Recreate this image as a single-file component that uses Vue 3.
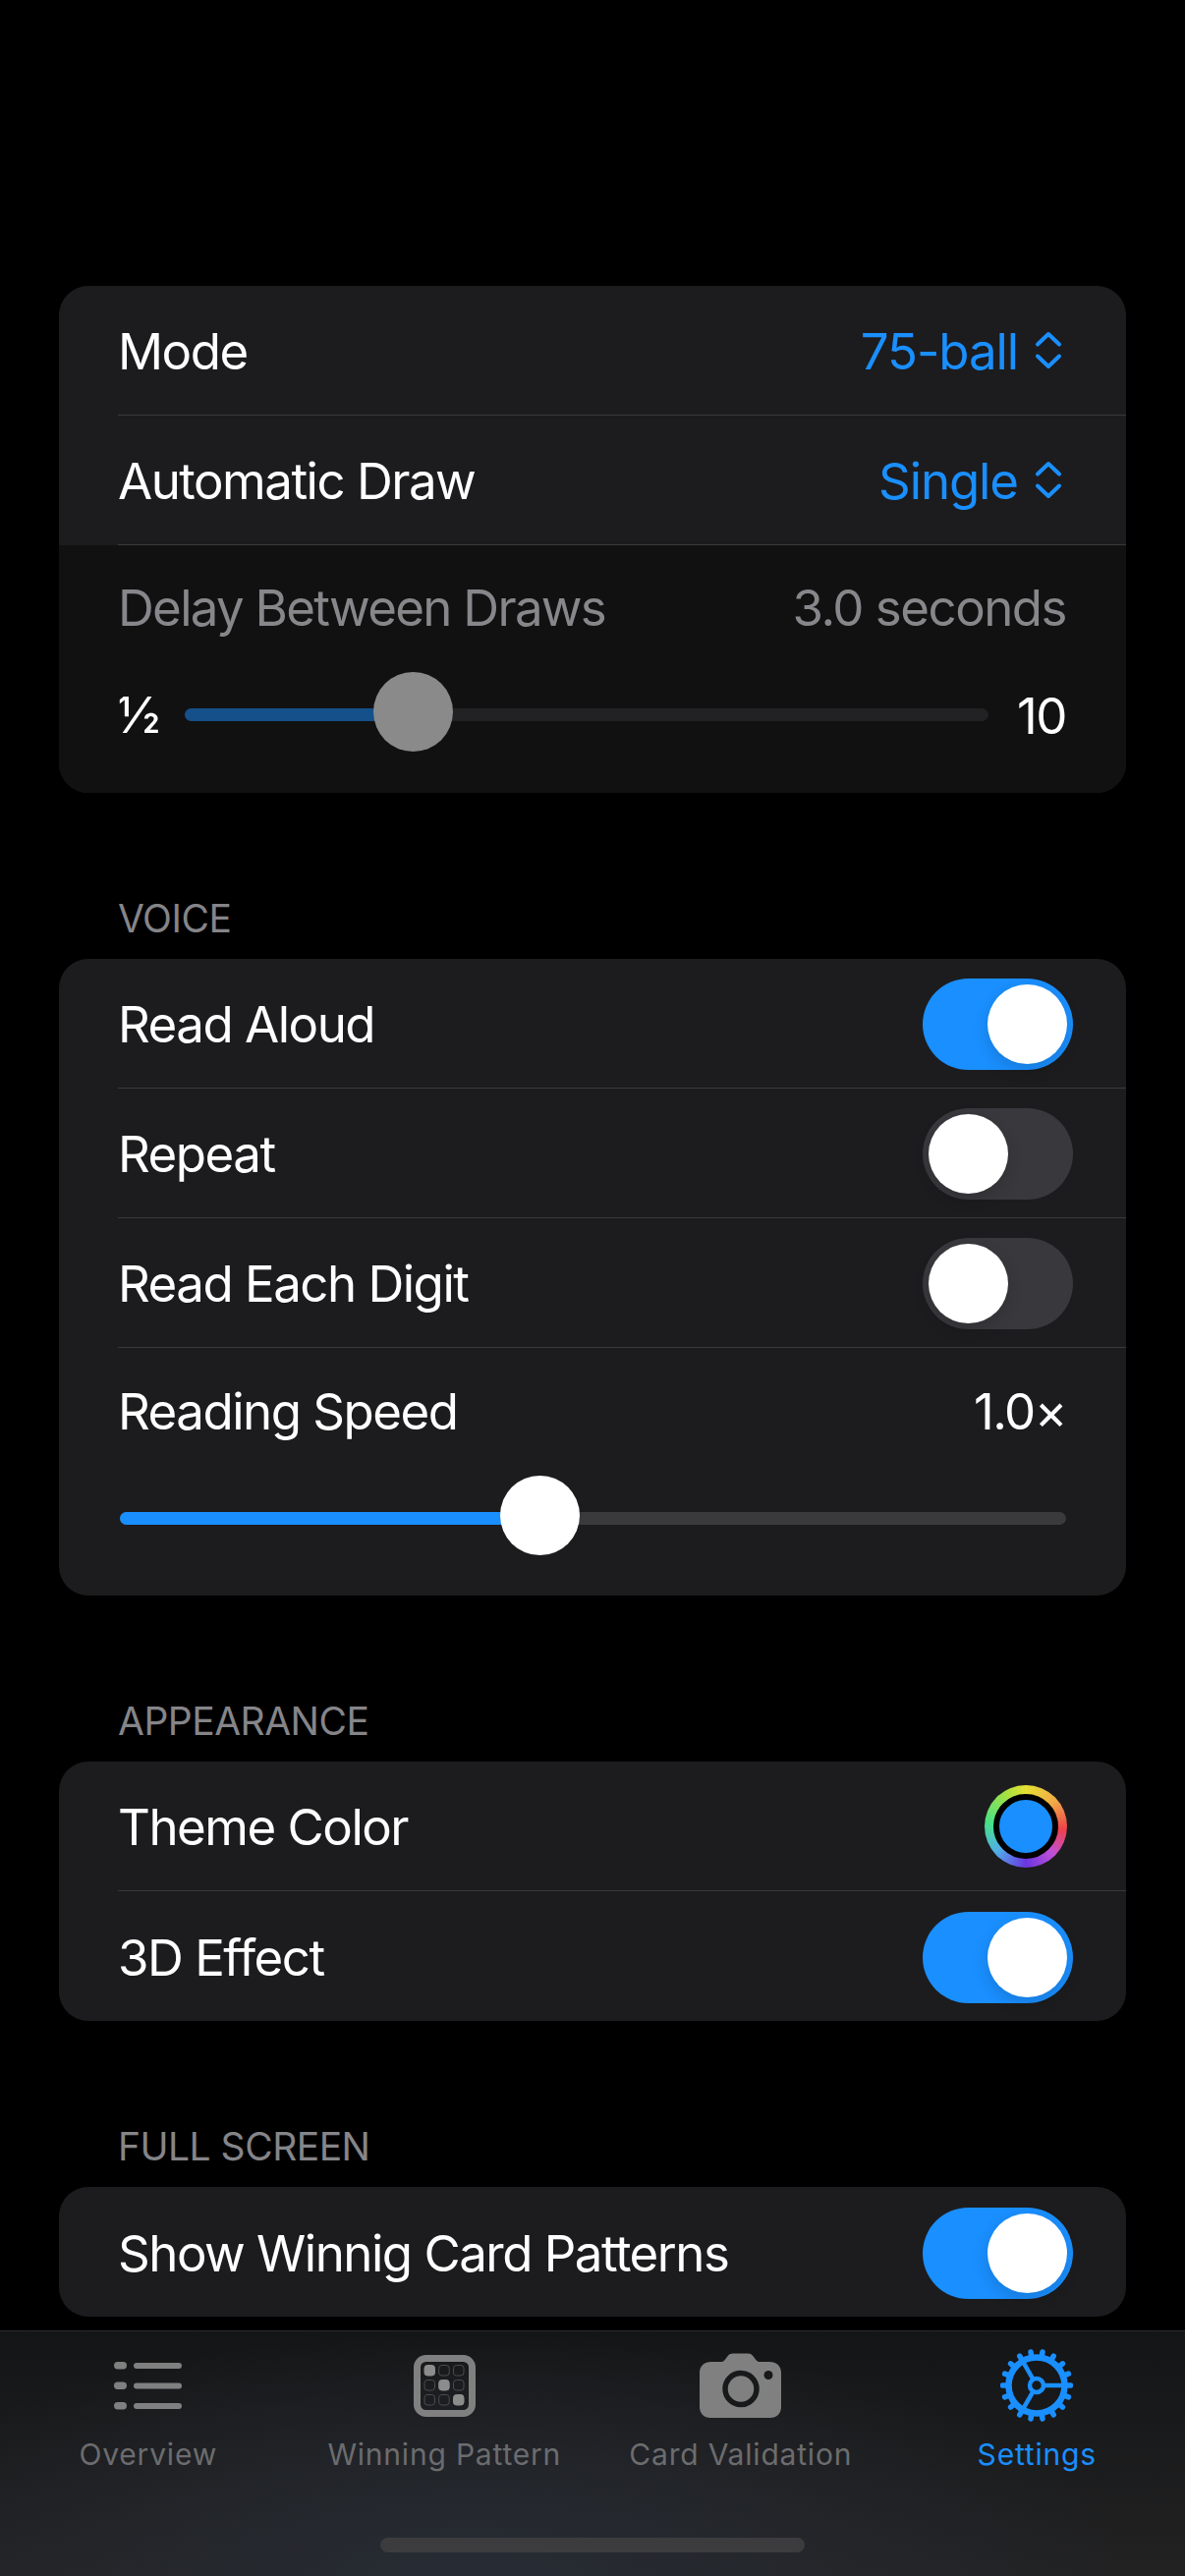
<script setup>
const voiceToggles = [
  { label: 'Read Aloud', on: true },
  { label: 'Repeat', on: false },
  { label: 'Read Each Digit', on: false },
]
const teeth = Array.from({ length: 18 }, (_, i) => {
  const a = (i * 20 * Math.PI) / 180
  return {
    x1: 37 + 29 * Math.cos(a),
    y1: 37 + 29 * Math.sin(a),
    x2: 37 + 34.5 * Math.cos(a),
    y2: 37 + 34.5 * Math.sin(a),
  }
})
const spokes = [0, 120, 240].map((d) => {
  const a = (d * Math.PI) / 180
  return {
    x1: 37 + 7 * Math.cos(a),
    y1: 37 + 7 * Math.sin(a),
    x2: 37 + 29 * Math.cos(a),
    y2: 37 + 29 * Math.sin(a),
  }
})
const cells = [
  { x: 432, y: 2407.5, on: true }, { x: 446.7, y: 2407.5 }, { x: 461.5, y: 2407.5 },
  { x: 432, y: 2422.5 }, { x: 446.7, y: 2422.5, on: true }, { x: 461.5, y: 2422.5 },
  { x: 432, y: 2437.5 }, { x: 446.7, y: 2437.5 }, { x: 461.5, y: 2437.5, on: true },
].map((c) => ({ ...c, x: c.x - 421, y: c.y - 2397 }))
</script>

<template>
  <div class="screen">
    <main class="list">
      <section class="card">
        <div class="row">
          <span class="label">Mode</span>
          <span class="picker"><span class="pick-value">75-ball</span>
            <svg class="updown" width="28" height="39" viewBox="0 0 28 39" fill="none" stroke="#1a8fff" stroke-width="4" stroke-linecap="round" stroke-linejoin="round"><path d="M3 13.500 14 3l11 10.500M3 25.500 14 36l11-10.500"/></svg>
          </span>
        </div>
        <div class="row">
          <span class="label">Automatic Draw</span>
          <span class="picker"><span class="pick-value">Single</span>
            <svg class="updown" width="28" height="39" viewBox="0 0 28 39" fill="none" stroke="#1a8fff" stroke-width="4" stroke-linecap="round" stroke-linejoin="round"><path d="M3 13.500 14 3l11 10.500M3 25.500 14 36l11-10.500"/></svg>
          </span>
        </div>
        <div class="disabled">
          <div class="value-line dim">
            <span class="label tight">Delay Between Draws</span>
            <span class="value">3.0 seconds</span>
          </div>
          <div class="delay-slider">
            <span class="half">½</span>
            <div class="track dark">
              <div class="fill dark-fill"></div>
              <div class="thumb gray-thumb"></div>
            </div>
            <span class="value">10</span>
          </div>
        </div>
      </section>

      <h2 class="section">VOICE</h2>
      <section class="card">
        <div v-for="t in voiceToggles" :key="t.label" class="row">
          <span class="label">{{ t.label }}</span>
          <span class="switch" :class="{ on: t.on }"><i></i></span>
        </div>
        <div class="speed">
          <div class="value-line">
            <span class="label">Reading Speed</span>
            <span class="value">1.0×</span>
          </div>
          <div class="track speed-track">
            <div class="fill speed-fill"></div>
            <div class="thumb speed-thumb"></div>
          </div>
        </div>
      </section>

      <h2 class="section">APPEARANCE</h2>
      <section class="card">
        <div class="row">
          <span class="label">Theme Color</span>
          <span class="well"><i></i></span>
        </div>
        <div class="row last">
          <span class="label">3D Effect</span>
          <span class="switch on"><i></i></span>
        </div>
      </section>

      <h2 class="section">FULL SCREEN</h2>
      <section class="card">
        <div class="row last">
          <span class="label">Show Winnig Card Patterns</span>
          <span class="switch on"><i></i></span>
        </div>
      </section>
    </main>

    <nav class="tabs">
      <div class="tab">
        <div class="icon">
          <svg width="70" height="66" viewBox="0 0 70 66" fill="#808080">
            <rect x="0" y="9" width="13" height="7.5" rx="3.7"/><rect x="20" y="10" width="49" height="6" rx="3"/>
            <rect x="0" y="29.5" width="13" height="7.5" rx="3.7"/><rect x="20" y="30.5" width="49" height="6" rx="3"/>
            <rect x="0" y="50" width="13" height="7.5" rx="3.7"/><rect x="20" y="51" width="49" height="6" rx="3"/>
          </svg>
        </div>
        <span>Overview</span>
      </div>
      <div class="tab">
        <div class="icon">
          <svg width="63" height="63" viewBox="0 0 63 63">
            <rect x="3.5" y="3.5" width="56" height="56" rx="9" fill="none" stroke="#808080" stroke-width="7"/>
            <rect v-for="(c, i) in cells" :key="i" :x="c.x" :y="c.y" width="10.5" height="10.5" rx="3"
              :fill="c.on ? '#8c8c8c' : 'none'" :stroke="c.on ? '#8c8c8c' : '#4c4c4c'" stroke-width="1"/>
          </svg>
        </div>
        <span>Winning Pattern</span>
      </div>
      <div class="tab">
        <div class="icon">
          <svg width="83" height="66" viewBox="0 0 83 66">
            <path fill="#808080" d="M12 9h9c2.500 0 3.800-.8 5.300-2.800l1.800-2.400C29.800 1.500 31.300.5 34 .5h15c2.700 0 4.200 1 5.900 3.300l1.800 2.400C58.200 8.200 59.500 9 62 9h9c7.500 0 12 4.500 12 11v35c0 6.500-4.500 11-11 11H11C4.500 66 0 61.500 0 55V20C0 13.500 4.500 9 12 9Z"/>
            <circle cx="42" cy="36.500" r="16" fill="#808080" stroke="#17191a" stroke-width="5.500"/>
            <circle cx="70" cy="22.500" r="4.500" fill="#17191a"/>
          </svg>
        </div>
        <span>Card Validation</span>
      </div>
      <div class="tab active">
        <div class="icon">
          <svg width="74" height="74" viewBox="0 0 74 74" fill="none" stroke="#1a8fff">
            <circle cx="37" cy="37" r="28.500" stroke-width="6.500"/>
            <line v-for="(t, i) in teeth" :key="i" :x1="t.x1" :y1="t.y1" :x2="t.x2" :y2="t.y2" stroke-width="5.500" stroke-linecap="round"/>
            <line v-for="(s, i) in spokes" :key="'s' + i" :x1="s.x1" :y1="s.y1" :x2="s.x2" :y2="s.y2" stroke-width="4.500"/>
            <circle cx="37" cy="37" r="7" stroke-width="4.500"/>
          </svg>
        </div>
        <span>Settings</span>
      </div>
      <div class="home"></div>
    </nav>
  </div>
</template>

<style>
html, body { margin: 0; background: #000; }
</style>

<style scoped>
.screen {
  width: 1206px;
  height: 2622px;
  background: #000;
  color: #fff;
  font-family: Inter, "Liberation Sans", sans-serif;
  font-size: 51px;
  display: flex;
  flex-direction: column;
  overflow: hidden;
}
.label {
  letter-spacing: -1.5px;
  padding-top: 2px;
}
.label.tight { letter-spacing: -1.7px; }
.value {
  letter-spacing: -1.5px;
  padding-top: 2px;
}
.pick-value {
  letter-spacing: -1.1px;
  padding-top: 2px;
}
.list {
  flex: 1;
  padding: 291px 60px 0;
}
.card {
  background: #1c1c1e;
  border-radius: 30px;
  overflow: hidden;
}
.row {
  height: 132px;
  box-sizing: border-box;
  margin-left: 60px;
  padding-right: 54px;
  border-bottom: 1px solid #3a3a3c;
  display: flex;
  align-items: center;
  justify-content: space-between;
}
.row.last { border-bottom: 0; }
.picker {
  display: flex;
  align-items: center;
  gap: 17px;
  padding-right: 11px;
  color: #1a8fff;
}
.updown { display: block; }
.disabled {
  height: 252px;
  box-sizing: border-box;
  background: #111112;
  padding: 36px 61px 0 60px;
}
.value-line {
  height: 52px;
  display: flex;
  align-items: center;
  justify-content: space-between;
}
.dim { color: #87878b; }
.delay-slider {
  margin-top: 52px;
  display: flex;
  align-items: center;
  height: 64px;
}
.half { width: 68px; letter-spacing: -1.3px; }
.track {
  position: relative;
  height: 13px;
  border-radius: 7px;
}
.track.dark {
  flex: 1;
  margin-right: 29px;
  background: #222224;
}
.fill {
  position: absolute;
  left: 0;
  top: 0;
  bottom: 0;
  border-radius: 7px;
}
.dark-fill { width: 232px; background: #15508a; }
.thumb {
  position: absolute;
  width: 81px;
  height: 81px;
  top: -37px;
  border-radius: 50%;
}
.gray-thumb { left: 192px; background: #8a8a8a; }
.speed {
  height: 252px;
  box-sizing: border-box;
  padding: 37px 61px 0 60px;
}
.speed-track {
  margin: 78px 0 0 2px;
  background: #3a3a3c;
}
.speed-fill { width: 427px; background: #1a8fff; }
.speed-thumb { left: 387px; background: #fff; }
.section {
  margin: 0;
  height: 169px;
  box-sizing: border-box;
  padding: 105px 0 0 60px;
  font-size: 39px;
  line-height: 46px;
  font-weight: 400;
  letter-spacing: -0.5px;
  color: #858589;
}
.switch {
  width: 153px;
  height: 93px;
  margin-top: 2px;
  border-radius: 47px;
  background: #39393d;
  position: relative;
  display: block;
}
.switch i {
  position: absolute;
  left: 6px;
  top: 6px;
  width: 81px;
  height: 81px;
  border-radius: 50%;
  background: #fff;
  box-shadow: 0 6px 16px rgba(0, 0, 0, 0.15);
}
.switch.on { background: #1a8fff; }
.switch.on i { left: 66px; }
.well {
  width: 84px;
  height: 84px;
  margin-right: 6px;
  border-radius: 50%;
  background: conic-gradient(#e6e033 0deg, #f0a848 50deg, #f0404a 95deg, #c050d8 135deg, #6a35e0 180deg, #50b0e8 230deg, #48e088 275deg, #a8e040 330deg, #e6e033 360deg);
  display: flex;
  align-items: center;
  justify-content: center;
}
.well i {
  width: 54px;
  height: 54px;
  border-radius: 50%;
  background: #1a8fff;
  border: 6px solid #000;
}
.tabs {
  position: relative;
  height: 250px;
  box-sizing: border-box;
  border-top: 1px solid #2b2b2d;
  display: flex;
  background:
    radial-gradient(ellipse 55% 100% at 40% 100%, #272c34, rgba(39, 44, 52, 0) 100%),
    linear-gradient(#141516, #222223);
}
.tab {
  flex: 1;
  display: flex;
  flex-direction: column;
  align-items: center;
  padding-top: 13px;
  font-size: 30px;
  line-height: 40px;
  letter-spacing: 0.8px;
  color: #6c6c6e;
}
.icon {
  height: 84px;
  display: flex;
  align-items: center;
  justify-content: center;
  margin-bottom: 8px;
}
.tab.active { color: #1a8fff; }
.home {
  position: absolute;
  left: 387px;
  top: 210px;
  width: 432px;
  height: 15px;
  border-radius: 8px;
  background: #3c3c3e;
}
</style>
